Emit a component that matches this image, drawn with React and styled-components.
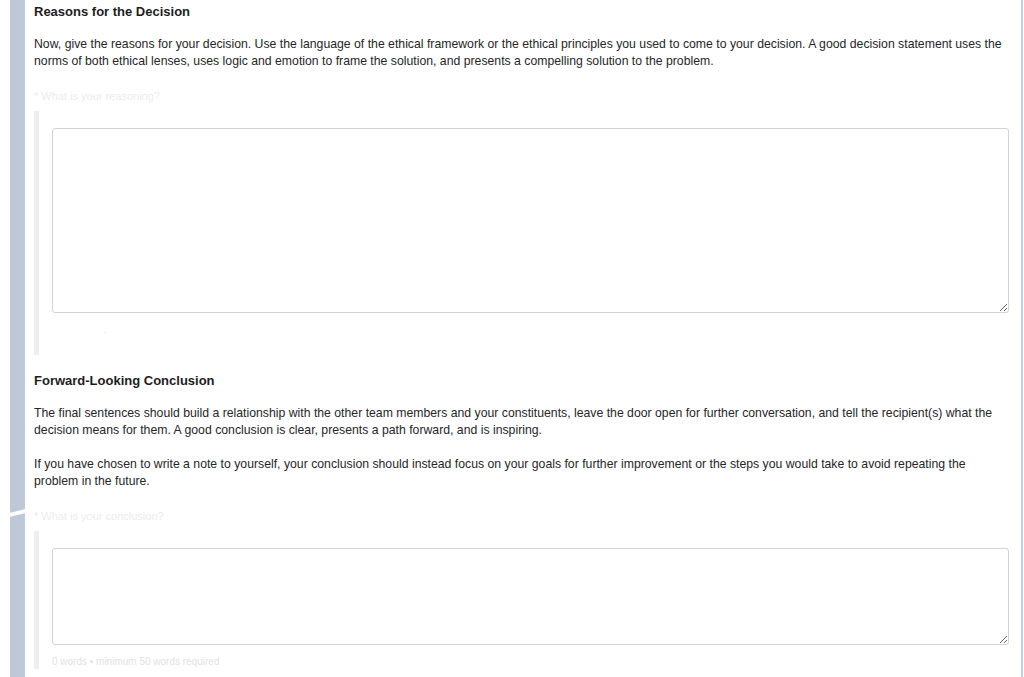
import React from 'react'
import styled, { createGlobalStyle } from 'styled-components'

const GlobalStyle = createGlobalStyle`
  html, body {
    margin: 0;
    padding: 0;
    background: #fff;
  }
  body {
    font-family: "Liberation Sans", Arial, Helvetica, sans-serif;
    color: #222;
  }
`

const sections = [
  {
    title: 'Reasons for the Decision',
    paragraphs: [
      'Now, give the reasons for your decision. Use the language of the ethical framework or the ethical principles you used to come to your decision. A good decision statement uses the norms of both ethical lenses, uses logic and emotion to frame the solution, and presents a compelling solution to the problem.',
    ],
    label: '* What is your reasoning?',
    rows: 185,
    note: '.',
    noteIndent: 52,
    blockHeight: 244,
  },
  {
    title: 'Forward-Looking Conclusion',
    paragraphs: [
      'The final sentences should build a relationship with the other team members and your constituents, leave the door open for further conversation, and tell the recipient(s) what the decision means for them. A good conclusion is clear, presents a path forward, and is inspiring.',
      'If you have chosen to write a note to yourself, your conclusion should instead focus on your goals for further improvement or the steps you would take to avoid repeating the problem in the future.',
    ],
    label: '* What is your conclusion?',
    rows: 97,
    note: '0 words • minimum 50 words required',
    noteIndent: 0,
  },
]

const App = () => {
  return (
    <>
      <GlobalStyle />
      <Page>
        <SideBar />
        <Content>
          {sections.map((s, i) => (
            <Section key={i}>
              <Heading>{s.title}</Heading>
              {s.paragraphs.map((p, j) => (
                <Para key={j}>{p}</Para>
              ))}
              <Label>{s.label}</Label>
              <Block $h={s.blockHeight}>
                <Area $h={s.rows} />
                <Note $indent={s.noteIndent}>{s.note}</Note>
              </Block>
            </Section>
          ))}
        </Content>
        <RightLine />
      </Page>
    </>
  )
}

export default App

const Page = styled.div`
  display: flex;
  height: 677px;
  overflow: hidden;
  padding-left: 10px;
`

const SideBar = styled.div`
  position: relative;
  flex: 0 0 15px;
  background: #bdc9d7;

  &::after {
    content: '';
    position: absolute;
    left: -2px;
    top: 511px;
    width: 19px;
    height: 4px;
    background: #fff;
    transform: skewY(-14deg);
  }
`

const Content = styled.div`
  flex: 1;
  padding: 3px 12px 0 9px;
  min-width: 0;
`

const RightLine = styled.div`
  flex: 0 0 2px;
  margin-right: 1px;
  background: #c5cfdc;
`

const Section = styled.div`
  &:nth-child(2) {
    margin-top: 17px;
  }
`

const Heading = styled.h3`
  margin: 0;
  font-size: 13px;
  line-height: 17px;
  font-weight: bold;
  color: #1d1d1d;
`

const Para = styled.p`
  margin: 16px 0 0;
  font-size: 12.25px;
  line-height: 17px;
  color: #262626;

  & + & {
    margin-top: 17px;
  }
`

const Label = styled.div`
  margin-top: 19px;
  font-size: 11px;
  line-height: 14px;
  color: #ececec;
`

const Block = styled.div`
  margin-top: 8px;
  border-left: 5px solid #eeeeee;
  padding: 17px 0 0 13px;
  height: ${p => (p.$h ? `${p.$h - 17}px` : 'auto')};
`

const Area = styled.textarea`
  display: block;
  box-sizing: border-box;
  width: 100%;
  height: ${p => p.$h}px;
  border: 1px solid #d3d3d3;
  border-radius: 3px;
  background: #fff;
  resize: vertical;
  font-family: "Liberation Sans", Arial, sans-serif;
`

const Note = styled.div`
  margin-top: 10px;
  padding-left: ${p => p.$indent}px;
  font-size: 10px;
  line-height: 14px;
  color: #e2e2e2;
`
